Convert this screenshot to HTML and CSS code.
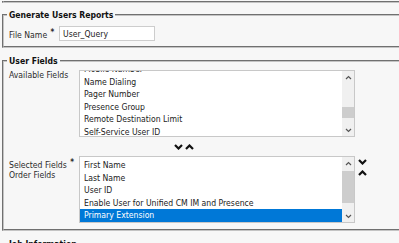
FILE: index.html
```html
<!DOCTYPE html>
<html lang="en">
<head>
    <meta charset="UTF-8">
    <meta name="viewport" content="width=device-width, initial-scale=1.0">
    <title>User Reports</title>
    <link rel="stylesheet" href="styles.css">
</head>
<body>

    <fieldset class="group group-prev"></fieldset>

    <fieldset class="group group-report">
        <legend>Generate Users Reports</legend>
        <div class="file-row">
            <label class="field-label" for="fileName">File Name <span class="req">*</span></label>
            <input class="text-input" type="text" id="fileName" value="User_Query">
        </div>
    </fieldset>

    <fieldset class="group group-fields">
        <legend>User Fields</legend>

        <div class="list-row">
            <div class="field-label">Available Fields</div>
            <div class="listbox">
                <div class="list-items">
                    <div class="list-inner available">
                        <div class="item">Mobile Number</div>
                        <div class="item">Name Dialing</div>
                        <div class="item">Pager Number</div>
                        <div class="item">Presence Group</div>
                        <div class="item">Remote Destination Limit</div>
                        <div class="item">Self-Service User ID</div>
                    </div>
                </div>
                <div class="scrollbar">
                    <div class="sb-btn"><svg width="7" height="5" viewBox="0 0 7 5"><polyline points="1,4 3.5,1.5 6,4" fill="none" stroke="#555" stroke-width="1.2"/></svg></div>
                    <div class="sb-track"><div class="sb-thumb thumb-available"></div></div>
                    <div class="sb-btn"><svg width="7" height="5" viewBox="0 0 7 5"><polyline points="1,1 3.5,3.5 6,1" fill="none" stroke="#555" stroke-width="1.2"/></svg></div>
                </div>
            </div>
        </div>

        <div class="move-row">
            <svg class="chev" width="9" height="6" viewBox="0 0 9 6"><polyline points="1,1 4.5,4.5 8,1" fill="none" stroke="#111" stroke-width="2.2"/></svg>
            <svg class="chev" width="9" height="6" viewBox="0 0 9 6"><polyline points="1,5 4.5,1.5 8,5" fill="none" stroke="#111" stroke-width="2.2"/></svg>
        </div>

        <div class="list-row">
            <div class="field-label label-selected">Selected Fields <span class="req">*</span><br>Order Fields</div>
            <div class="listbox">
                <div class="list-items">
                    <div class="list-inner selected">
                        <div class="item">First Name</div>
                        <div class="item">Last Name</div>
                        <div class="item">User ID</div>
                        <div class="item">Enable User for Unified CM IM and Presence</div>
                        <div class="item active">Primary Extension</div>
                    </div>
                </div>
                <div class="scrollbar">
                    <div class="sb-btn"><svg width="7" height="5" viewBox="0 0 7 5"><polyline points="1,4 3.5,1.5 6,4" fill="none" stroke="#555" stroke-width="1.2"/></svg></div>
                    <div class="sb-track"><div class="sb-thumb thumb-selected"></div></div>
                    <div class="sb-btn"><svg width="7" height="5" viewBox="0 0 7 5"><polyline points="1,1 3.5,3.5 6,1" fill="none" stroke="#555" stroke-width="1.2"/></svg></div>
                </div>
            </div>
            <div class="order-arrows">
                <svg class="chev" width="9" height="6" viewBox="0 0 9 6"><polyline points="1,1 4.5,4.5 8,1" fill="none" stroke="#111" stroke-width="2.2"/></svg>
                <svg class="chev" width="9" height="6" viewBox="0 0 9 6"><polyline points="1,5 4.5,1.5 8,5" fill="none" stroke="#111" stroke-width="2.2"/></svg>
            </div>
        </div>
    </fieldset>

    <fieldset class="group group-job">
        <legend>Job Information</legend>
    </fieldset>

</body>
</html>
```

FILE: styles.css
```css
html {
    overflow: hidden;
    background-color: #f7f7f7;
}

body {
    margin: 0;
    padding-left: 2px;
    width: 440px;
    font-family: "DejaVu Sans Condensed", "DejaVu Sans", sans-serif;
    font-size: 8.6px;
    color: #2b2b2b;
}

/* fieldsets */
.group {
    margin: 0 0 7px 0;
    padding: 5px 5px 5px 5px;
    border: 2px groove #c4c4c4;
    min-width: 0;
}

.group legend {
    font-weight: bold;
    color: #111;
    line-height: 12px;
    padding: 0 2px;
    margin-left: -2px;
}

.group-prev {
    height: 0;
    padding: 0;
    margin-top: 1px;
    margin-bottom: 6px;
    border-top: none;
}

.group-fields {
    padding-top: 3px;
    padding-bottom: 6px;
}

.group-job {
    height: 30px;
}

.field-label {
    line-height: 11px;
}

.label-selected {
    line-height: 10px;
    padding-top: 2px;
}

.req {
    font-weight: bold;
    vertical-align: 3px;
    font-size: 8px;
    margin-left: 1px;
}

/* file name */
.file-row {
    display: grid;
    grid-template-columns: 50px 96px;
    align-items: center;
}

.text-input {
    height: 15px;
    box-sizing: border-box;
    margin: 0;
    padding: 0 3px;
    border: 1px solid #cdcdcd;
    background: #fff;
    font: inherit;
    color: #222;
    outline: 0;
}

/* list boxes */
.list-row {
    display: grid;
    grid-template-columns: 70px 276px 20px;
    align-items: start;
}

.listbox {
    display: flex;
    height: 67px;
    box-sizing: border-box;
    border: 1px solid #c8c8c8;
    background: #fff;
}

.list-items {
    flex: 1;
    overflow: hidden;
}

.list-inner.available {
    margin-top: -8px;
}

.list-inner.selected {
    padding-top: 2px;
}

.item {
    height: 12.6px;
    line-height: 12.6px;
    padding-left: 4px;
    color: #222;
    white-space: nowrap;
}

.item.active {
    background-color: #0078d7;
    color: #fff;
}

.scrollbar {
    width: 12px;
    display: flex;
    flex-direction: column;
    background: #f0f0f0;
}

.sb-btn {
    height: 12px;
    display: flex;
    align-items: center;
    justify-content: center;
}

.sb-track {
    flex: 1;
}

.sb-thumb {
    background: #cdcdcd;
}

.thumb-available {
    margin-top: 24px;
    height: 11px;
}

.thumb-selected {
    margin-top: 2px;
    height: 32px;
}

.move-row {
    height: 19px;
    display: flex;
    align-items: center;
    gap: 2px;
    padding-left: 165px;
}

.order-arrows {
    display: flex;
    flex-direction: column;
    gap: 5px;
    padding: 3px 0 0 3px;
}

.chev {
    display: block;
}
```
